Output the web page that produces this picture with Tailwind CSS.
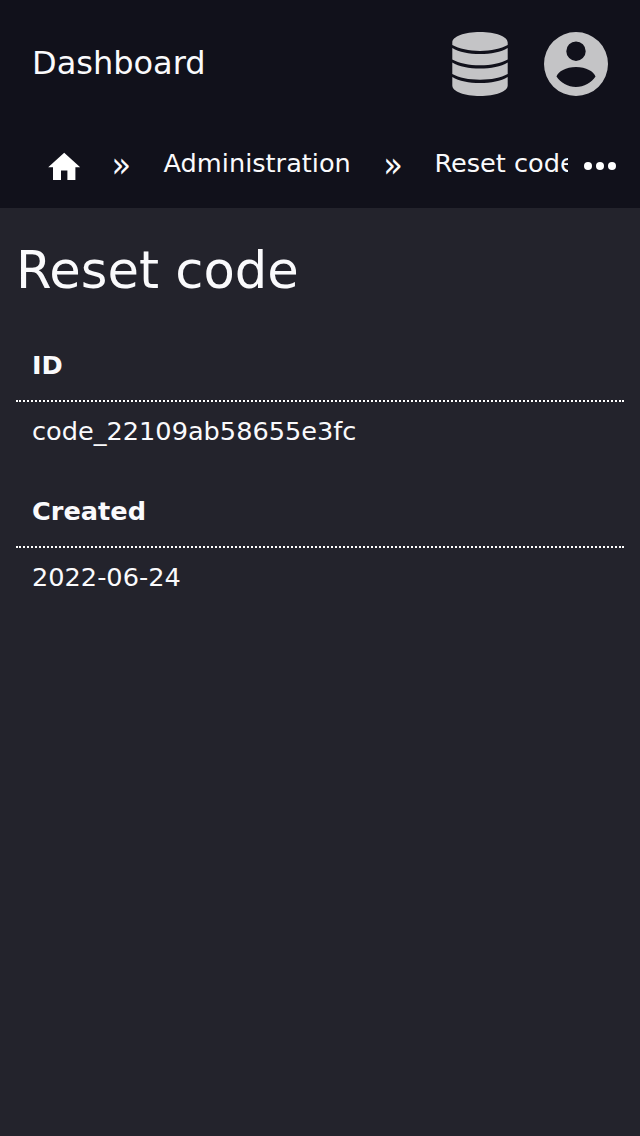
<!DOCTYPE html>
<html lang="en"><head><meta charset="utf-8"><title>Reset code</title>
<script src="https://cdn.jsdelivr.net/npm/@tailwindcss/browser@4"></script></head>
<body class="min-h-screen bg-[#23232c] text-[#fafafc] font-['DejaVu_Sans',sans-serif] text-[25.6px] leading-[34px]">
<header class="h-52 bg-[#11111b]">
<div class="flex h-32 items-center justify-between px-8">
<span class="-mt-0.5 text-[32px]">Dashboard</span>
<div class="flex gap-8 text-[#c4c4c6]">
<svg class="size-16" viewBox="0 0 64 64" fill="currentColor"><path d="M4.300 10.500C4.300 4.500 16.500 0 32 0s27.700 4.500 27.700 10.500v2.500C53 16.800 43 18.900 32 18.900S11 16.800 4.300 13zM4.300 16C11 20 21 22.100 32 22.100s21-2.100 27.700-6.100v11.500C53 31.300 43 33.300 32 33.300S11 31.300 4.300 27.500zM4.300 30.500C11 34.500 21 36.500 32 36.500s21-2 27.700-6v11.500C53 45.800 43 47.700 32 47.700S11 45.800 4.300 42zM4.300 45C11 49 21 51 32 51s21-2 27.700-6v8.500C59.700 59.500 47.500 64 32 64S4.300 59.500 4.300 53.500z"/></svg>
<svg class="size-16" viewBox="0 0 64 64" fill="currentColor" fill-rule="evenodd"><path d="M32 0a32 32 0 1 0 0 64 32 32 0 0 0 0-64zm0 9.500a9.700 9.700 0 1 1 0 19.400 9.700 9.700 0 0 1 0-19.400zM32 55c-8 0-15.500-4.200-19.500-10.500C14 39.500 22 35 32 35s18 4.500 19.500 9.500C47.500 50.800 40 55 32 55z"/></svg>
</div></div>
<nav class="flex h-20 pl-11 pr-5">
<div class="flex w-[524px] shrink-0 overflow-hidden whitespace-nowrap">
<svg class="ml-[0.8px] mt-[19.6px] size-[38.4px] shrink-0 text-white" viewBox="0 0 24 24" fill="currentColor"><path d="M10 20v-6h4v6h5v-8h3L12 3 2 12h3v8z"/></svg>
<span class="ml-[28.300px] mt-[20px] h-[34px] w-[20px] scale-y-110 text-[32px]">»</span>
<span class="ml-[32.500px] mt-[18px]">Administration</span>
<span class="ml-[32.300px] mt-[20px] h-[34px] w-[20px] scale-y-110 text-[32px]">»</span>
<span class="ml-[31.700px] mt-[18px]">Reset code</span>
</div>
<svg class="ml-3 mt-[18px] size-10 shrink-0 text-white" viewBox="0 0 40 40" fill="currentColor"><circle cx="8" cy="20" r="4"/><circle cx="20" cy="20" r="4"/><circle cx="32" cy="20" r="4"/></svg>
</nav></header>
<main class="px-4 pt-8">
<h1 class="text-[51.2px] leading-[60px]">Reset code</h1>
<dl class="mt-8">
<dt class="h-[70px] border-b-2 border-dotted border-white px-4 pt-4 font-bold">ID</dt>
<dd class="h-[76px] px-4 pt-3">code_22109ab58655e3fc</dd>
<dt class="h-[70px] border-b-2 border-dotted border-white px-4 pt-4 font-bold">Created</dt>
<dd class="px-4 pt-3">2022-06-24</dd>
</dl></main></body></html>
